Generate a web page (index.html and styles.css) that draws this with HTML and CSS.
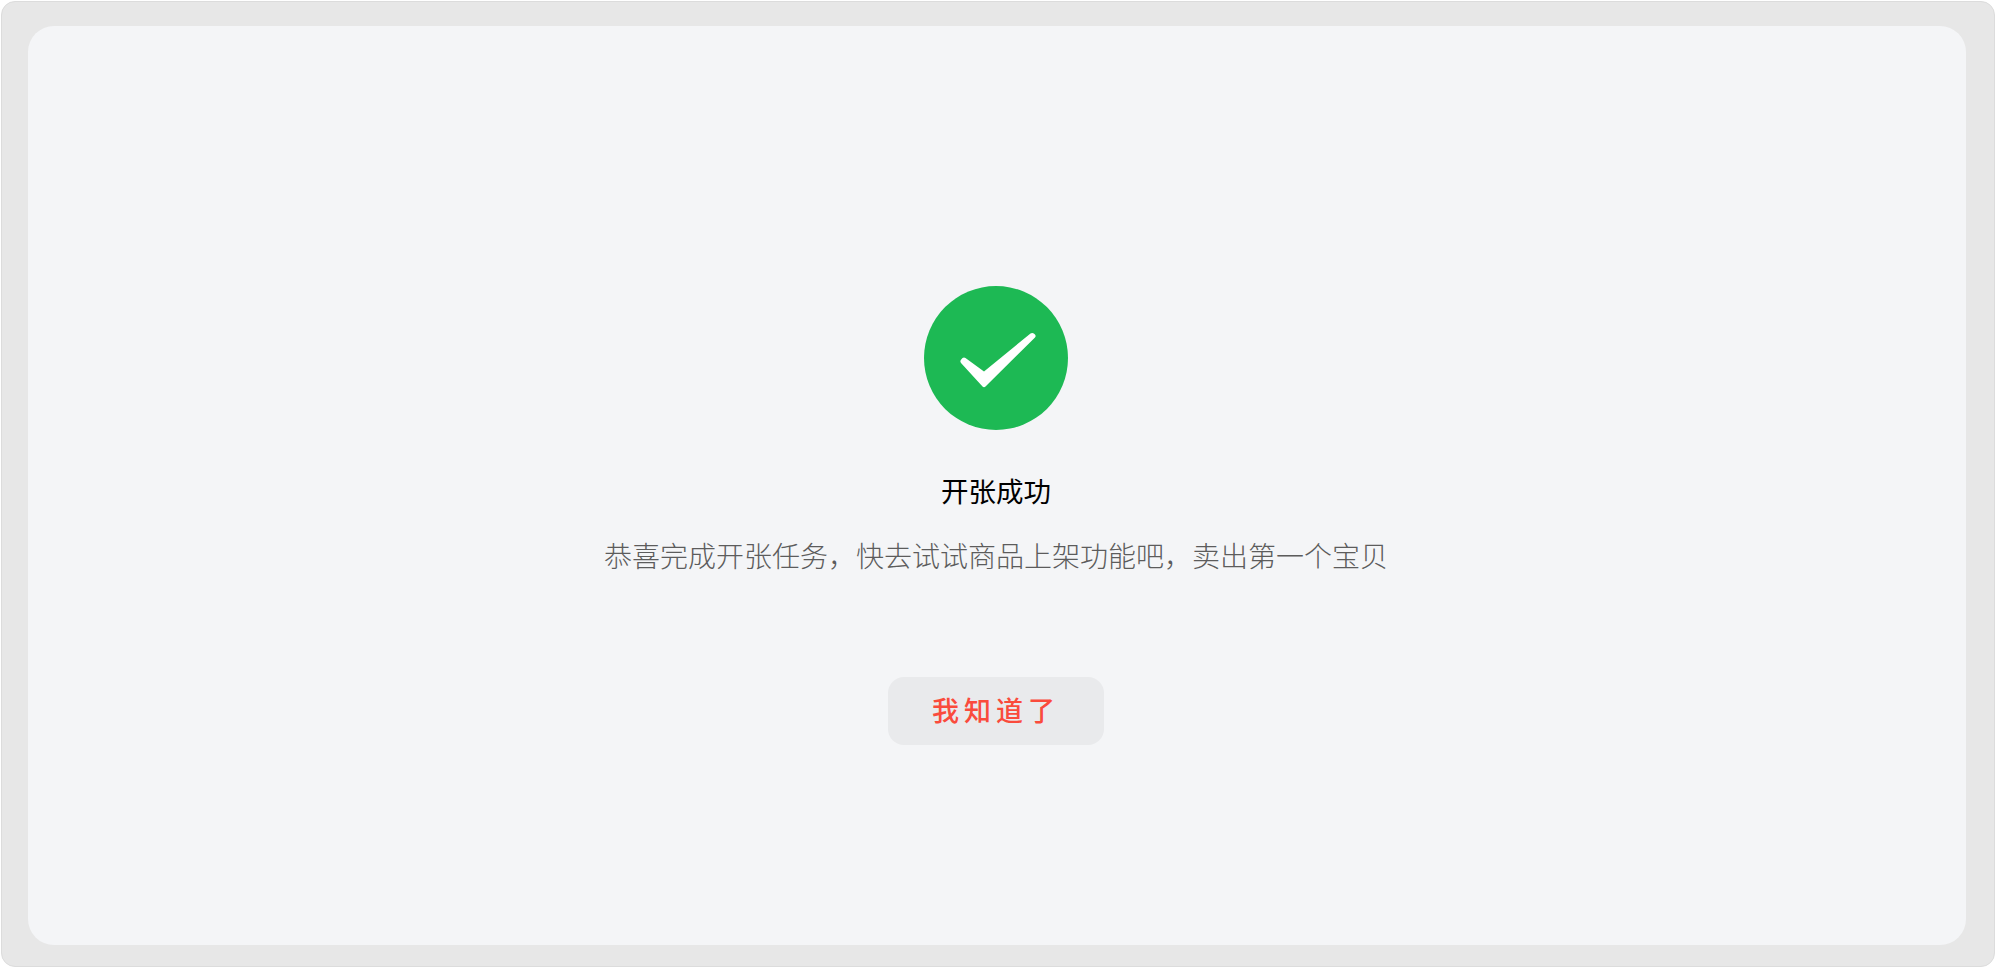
FILE: index.html
```html
<!DOCTYPE html>
<html lang="zh-CN">
<head>
    <meta charset="UTF-8">
    <title>开张成功</title>
    <link rel="stylesheet" href="styles.css">
</head>
<body>
    <div class="frame">
        <div class="panel">
            <!-- Success icon -->
            <svg class="success-icon" viewBox="0 0 144 144" width="144" height="144">
                <circle cx="72" cy="72" r="72" fill="#1db954"/>
                <path d="M36.800 74 Q35.800 75.500 37 77 L58.500 100.500 Q60 102 61.500 100.500 L111 51.500 Q112.500 50 110.500 48 Q108.500 46.500 106.500 47.500 L60 85.500 L41.500 72 Q40 71 38.500 72 Z" fill="#fff"/>
            </svg>

            <h1 class="title">开张成功</h1>
            <p class="desc">恭喜完成开张任务，快去试试商品上架功能吧，卖出第一个宝贝</p>

            <button class="confirm-btn">我知道了</button>
        </div>
    </div>
</body>
</html>
```

FILE: styles.css
```css
* { box-sizing: border-box; }

html, body {
    margin: 0;
    height: 100%;
}

body {
    padding: 1px;
    background-color: #fff;
    font-family: "Noto Sans CJK SC", "Noto Sans", sans-serif;
}

/* Outer grey frame */
.frame {
    height: 100%;
    padding: 24px 28px 21px 26px;
    background-color: #e7e7e7;
    border: 1px solid #dcdcdc;
    border-radius: 14px;
}

/* Inner panel */
.panel {
    display: flex;
    flex-direction: column;
    align-items: center;
    height: 100%;
    padding: 260px 2px 0 0;
    background-color: #f4f5f7;
    border-radius: 26px;
}

.success-icon { display: block; }

.title {
    margin: 40px 0 0;
    font-size: 27.5px;
    line-height: 40px;
    font-weight: 400;
    color: #000;
}

.desc {
    margin: 25px 0 0;
    font-size: 28px;
    line-height: 40px;
    font-weight: 300;
    color: #5c5c5c;
}

.confirm-btn {
    width: 216px;
    height: 68px;
    margin-top: 102px;
    padding: 0 0 3px;
    border: none;
    border-radius: 16px;
    background-color: #e9eaec;
    color: #fa4b3c;
    font-family: inherit;
    font-size: 27px;
    font-weight: 500;
    letter-spacing: 5px;
    cursor: pointer;
}
```
